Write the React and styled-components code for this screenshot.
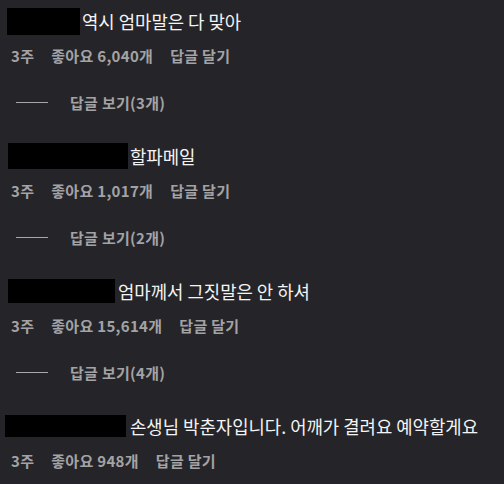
import React from "react";
import styled, { createGlobalStyle } from "styled-components";

const comments = [
  { id: 1, mask: { w: 73, h: 27, x: 7, gap: 2 }, text: "역시 엄마말은 다 맞아", likes: "6,040", replies: 3 },
  { id: 2, mask: { w: 120, h: 26, x: 8, gap: 2 }, text: "할파메일", likes: "1,017", replies: 2 },
  { id: 3, mask: { w: 107, h: 24, x: 8, gap: 3 }, text: "엄마께서 그짓말은 안 하셔", likes: "15,614", replies: 4 },
  { id: 4, mask: { w: 121, h: 22, x: 5, gap: 4 }, text: "손생님 박춘자입니다. 어깨가 결려요 예약할게요", likes: "948" },
];

export default function App() {
  return (
    <>
      <GlobalStyle />
      <List>
        {comments.map((c) => (
          <Comment key={c.id}>
            <Header>
              <Mask $w={c.mask.w} $h={c.mask.h} $x={c.mask.x} $gap={c.mask.gap} />
              <Body>{c.text}</Body>
            </Header>
            <Meta>
              <span>3주</span>
              <span>좋아요 {c.likes}개</span>
              <span>답글 달기</span>
            </Meta>
            {c.replies && (
              <Replies>
                <Line />
                <span>답글 보기({c.replies}개)</span>
              </Replies>
            )}
          </Comment>
        ))}
      </List>
    </>
  );
}

const GlobalStyle = createGlobalStyle`
  html, body {
    margin: 0;
    background: #252529;
  }
  body {
    font-family: "Noto Sans CJK KR", "Noto Sans", sans-serif;
    -webkit-font-smoothing: antialiased;
  }
`;

const List = styled.div`
  display: flex;
  flex-direction: column;
  gap: 30px;
  padding-top: 7px;
  width: 504px;
  height: 477px;
  overflow: hidden;
`;

const Comment = styled.div`
  display: flex;
  flex-direction: column;
`;

const Header = styled.div`
  display: flex;
  align-items: center;
  height: 28px;
`;

const Mask = styled.div`
  width: ${(p) => p.$w}px;
  height: ${(p) => p.$h}px;
  margin-left: ${(p) => p.$x}px;
  margin-right: ${(p) => p.$gap}px;
  background: #000;
  flex-shrink: 0;
`;

const Body = styled.span`
  color: #f4f4f5;
  font-size: 17.8px;
  white-space: nowrap;
`;

const Meta = styled.div`
  display: flex;
  align-items: center;
  gap: 17px;
  height: 20px;
  margin-top: 10px;
  padding-left: 11px;
  color: #a3a3a6;
  font-size: 15px;
  font-weight: 600;
  letter-spacing: 0.3px;
`;

const Replies = styled.div`
  display: flex;
  align-items: center;
  gap: 22px;
  height: 20px;
  margin-top: 27px;
  padding-left: 16px;
  color: #a3a3a6;
  font-size: 15px;
  font-weight: 600;
  letter-spacing: 0.3px;
`;

const Line = styled.div`
  width: 32px;
  height: 1px;
  background: #a8a8ab;
`;
